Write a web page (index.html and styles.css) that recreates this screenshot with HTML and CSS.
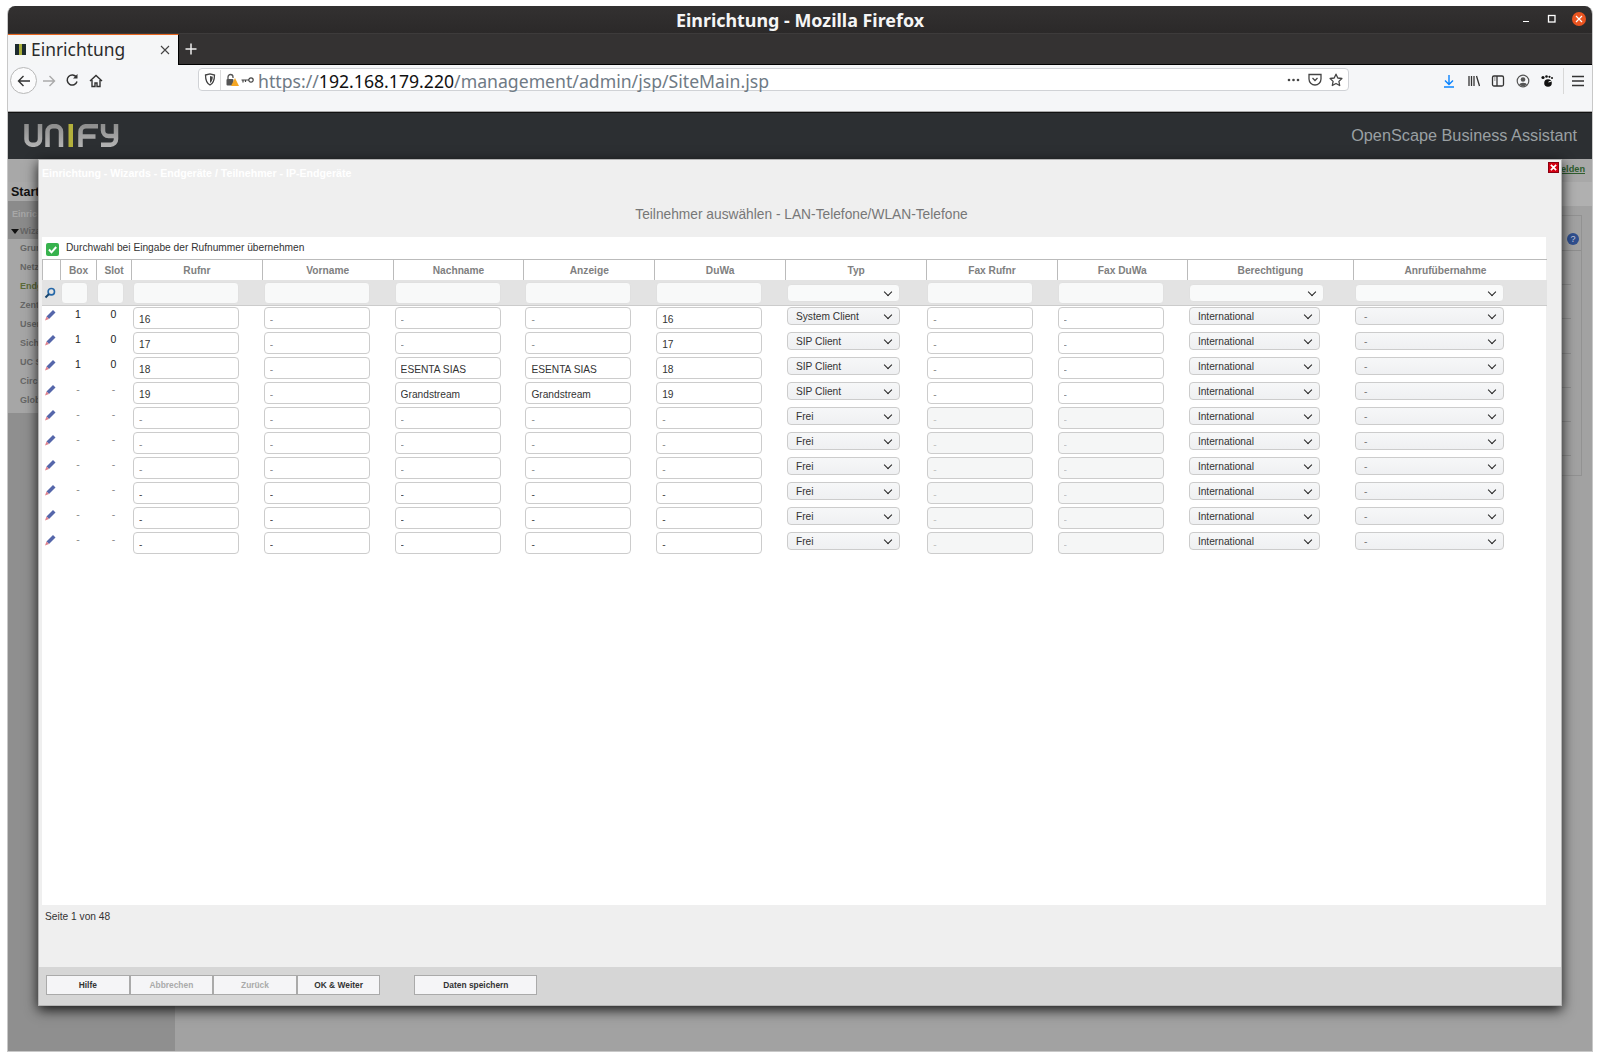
FILE: index.html
```html
<!DOCTYPE html>
<html lang="de">
<head>
<meta charset="utf-8">
<title>Einrichtung - Mozilla Firefox</title>
<link rel="stylesheet" href="styles.css">
</head>
<body>
<div class="window">
  <div class="titlebar">
    <span class="title">Einrichtung - Mozilla Firefox</span>
    <div class="winctl">
      <svg width="12" height="12" viewBox="0 0 12 12"><path d="M3 8.500h6" stroke="#fff" stroke-width="1.200"/></svg>
      <svg width="12" height="12" viewBox="0 0 12 12"><rect x="2.500" y="2.500" width="6.500" height="6.500" fill="none" stroke="#fff" stroke-width="1.300"/></svg>
      <span class="winclose"><svg width="14" height="14" viewBox="0 0 14 14"><path d="M4 4l6 6M10 4l-6 6" stroke="#fff" stroke-width="1.200"/></svg></span>
    </div>
  </div>
  <div class="tabbar">
    <div class="tab">
      <span class="favicon"><i></i></span>
      <span class="tabtext">Einrichtung</span>
      <svg class="tabx" width="10" height="10" viewBox="0 0 10 10"><path d="M1 1l8 8M9 1l-8 8" stroke="#444" stroke-width="1.100"/></svg>
    </div>
    <svg class="newtab" width="12" height="12" viewBox="0 0 12 12"><path d="M6 .5v11M.5 6h11" stroke="#eee" stroke-width="1.500"/></svg>
  </div>
  <div class="toolbar">
    <span class="backbtn"><svg width="16" height="16" viewBox="0 0 16 16"><path d="M14 8H2.500M7.500 3L2.500 8l5 5" fill="none" stroke="#333" stroke-width="1.400"/></svg></span>
    <svg class="tool-fwd" width="16" height="16" viewBox="0 0 16 16"><path d="M2 8h11.500M8.500 3l5 5-5 5" fill="none" stroke="#aaa" stroke-width="1.400"/></svg>
    <svg class="tool-reload" width="14" height="14" viewBox="0 0 14 14"><path d="M11.500 4.500A5 5 0 1 0 12 8.500" fill="none" stroke="#333" stroke-width="1.500"/><path d="M12.500 1v4.500H8z" fill="#333"/></svg>
    <svg class="tool-home" width="14" height="14" viewBox="0 0 14 14"><path d="M1 7l6-5.500L13 7M3 6v6.500h3V9h2v3.500h3V6" fill="none" stroke="#333" stroke-width="1.400"/></svg>
    <div class="urlbar">
      <svg class="u-shield" width="12" height="13" viewBox="0 0 12 13"><path d="M1.500 2L6 .8 10.500 2c0 5-1.500 8.500-4.500 10C3 10.500 1.500 7 1.500 2z" fill="none" stroke="#444" stroke-width="1.300"/><path d="M6 3l2.800.8C8.700 7 7.800 8.800 6 10z" fill="#444"/></svg>
      <span class="u-div"></span>
      <svg class="u-lock" width="14" height="14" viewBox="0 0 14 14"><path d="M3 6V4a2.500 2.500 0 0 1 5 0v1" fill="none" stroke="#555" stroke-width="1.300"/><rect x="1.500" y="6" width="7" height="6.500" rx="1" fill="#555"/><path d="M10 5l4 8H6z" fill="#f5a623"/></svg>
      <svg class="u-key" width="13" height="8" viewBox="0 0 13 8"><circle cx="10" cy="4" r="2.200" fill="none" stroke="#444" stroke-width="1.200"/><path d="M8 4H.5M2 4v2.500M4.500 4v2" stroke="#444" stroke-width="1.200" fill="none"/></svg>
      <span class="url">https://<b>192.168.179.220</b>/management/admin/jsp/SiteMain.jsp</span>
      <svg class="u-dots" width="13" height="4" viewBox="0 0 13 4"><circle cx="2" cy="2" r="1.300" fill="#444"/><circle cx="6.500" cy="2" r="1.300" fill="#444"/><circle cx="11" cy="2" r="1.300" fill="#444"/></svg>
      <svg class="u-pocket" width="14" height="13" viewBox="0 0 14 13"><path d="M1 1.500h12v4.500a6 6 0 0 1-12 0z" fill="none" stroke="#444" stroke-width="1.300"/><path d="M4.500 5L7 7.500 9.500 5" fill="none" stroke="#444" stroke-width="1.300"/></svg>
      <svg class="u-star" width="14" height="14" viewBox="0 0 14 14"><path d="M7 1.200l1.800 3.800 4.100.5-3 2.900.8 4.100L7 10.500l-3.700 2 .8-4.100-3-2.900 4.100-.5z" fill="none" stroke="#444" stroke-width="1.300" stroke-linejoin="round"/></svg>
    </div>
    <div class="tools-right">
      <svg width="14" height="14" viewBox="0 0 14 14"><path d="M7 1v9M3 6.500L7 10.500l4-4" fill="none" stroke="#0a84ff" stroke-width="1.400"/><path d="M2 13h10" stroke="#0a84ff" stroke-width="1.400"/></svg>
      <svg width="14" height="14" viewBox="0 0 14 14"><path d="M2 2v10M4.500 2v10M7 2v10M9.500 2l3 10" fill="none" stroke="#333" stroke-width="1.300"/></svg>
      <svg width="14" height="14" viewBox="0 0 14 14"><rect x="1.500" y="2" width="11" height="10" rx="1.500" fill="none" stroke="#333" stroke-width="1.300"/><path d="M6 2v10" stroke="#333" stroke-width="1.300"/><path d="M3 4h1.500M3 6h1.500" stroke="#777"/></svg>
      <svg width="14" height="14" viewBox="0 0 14 14"><circle cx="7" cy="7" r="5.800" fill="none" stroke="#555" stroke-width="1.200"/><circle cx="7" cy="5.500" r="2.300" fill="#555"/><path d="M3 10.500a4.500 3.200 0 0 1 8 0 5.500 5.500 0 0 1-8 0z" fill="#555"/></svg>
      <svg width="14" height="14" viewBox="0 0 14 14"><ellipse cx="8" cy="9" rx="3.800" ry="3.800" fill="#111"/><circle cx="3" cy="3.500" r="1.600" fill="#111"/><circle cx="6.500" cy="2.500" r="1.300" fill="#111"/><circle cx="9.500" cy="2.800" r="1.100" fill="#111"/><circle cx="12" cy="4" r="1" fill="#111"/><path d="M8.500 8l3-1" stroke="#fff" stroke-width="1"/></svg>
      <span class="t-div"></span>
      <svg width="14" height="14" viewBox="0 0 14 14"><path d="M1 2.500h12M1 7h12M1 11.500h12" stroke="#333" stroke-width="1.400"/></svg>
    </div>
  </div>
  <header class="appheader">
    <svg class="logo" width="95" height="23" viewBox="0 0 95 23" role="img" aria-label="Unify">
      <defs><linearGradient id="lg" gradientUnits="userSpaceOnUse" x1="0" y1="0" x2="0" y2="23"><stop offset="0" stop-color="#8c8c8c"/><stop offset="1" stop-color="#b4b4b4"/></linearGradient></defs>
      <g fill="none" stroke="url(#lg)" stroke-width="4.500">
        <path d="M2.500 0v15a5.500 5.500 0 0 0 5.500 5.700h2.500a5.500 5.500 0 0 0 5.500-5.700V0"/>
        <path d="M23.500 23V7.700a5.500 5.500 0 0 1 5.500-5.500h2.500a5.500 5.500 0 0 1 5.500 5.500V23"/>
        <path d="M56.500 23V7.700a5.500 5.500 0 0 1 5.500-5.500H74M56.500 12.500H71.500"/>
        <path d="M79 0v6.500a5.500 5.500 0 0 0 5.500 5.500H92M92 0V15a5.500 5.500 0 0 1-5.500 5.700H77"/>
      </g>
      <rect class="logo-i" x="44.500" y="0" width="4.500" height="23"/>
    </svg>
    <span class="appname">OpenScape Business Assistant</span>
  </header>
  <div class="appbody">
    <aside class="sidebar">
      <div class="side-top"></div>
      <div class="side-start">Start</div>
      <div class="side-dark">
        <div class="side-head">Einric</div>
        <div class="side-wiz"><i></i>Wiza</div>
      </div>
      <ul class="side-list">
        <li>Grun</li>
        <li>Netz</li>
        <li class="current">Endg</li>
        <li>Zent</li>
        <li>User</li>
        <li>Sich</li>
        <li>UC S</li>
        <li>Circ</li>
        <li>Glob</li>
      </ul>
    </aside>
    <main class="bg-main">
      <div class="bg-top"><a class="bg-link">Abmelden</a></div>
      <div class="bg-bar"></div>
      <div class="bg-panel">
        <div class="bg-panel-head"><span class="bg-help">?</span></div>
        <div class="bg-line"></div><div class="bg-line"></div><div class="bg-line"></div>
        <div class="bg-line"></div><div class="bg-line"></div><div class="bg-line"></div>
      </div>
    </main>

    <section class="modal">
      <span class="close"><svg width="8" height="8" viewBox="0 0 8 8"><path d="M1 1l6 6M7 1L1 7" stroke="#fff" stroke-width="2"/></svg></span>
      <div class="modal-head">
        <div class="crumb">Einrichtung - Wizards - Endgeräte / Teilnehmer - IP-Endgeräte</div>
        <h1 class="heading">Teilnehmer auswählen - LAN-Telefone/WLAN-Telefone</h1>
      </div>
      <div class="panel">
        <label class="checkrow">
          <span class="check"><svg width="13" height="13" viewBox="0 0 13 13"><path d="M3 6.500l2.500 2.800L10.200 4" fill="none" stroke="#fff" stroke-width="2"/></svg></span>
          Durchwahl bei Eingabe der Rufnummer übernehmen
        </label>
        <table class="grid">
          <colgroup>
            <col class="c-icon"><col class="c-box"><col class="c-slot"><col class="c-w"><col class="c-w"><col class="c-w"><col class="c-w"><col class="c-w"><col class="c-typ"><col class="c-fax"><col class="c-fax"><col class="c-ber"><col class="c-anr">
          </colgroup>
          <thead>
            <tr class="hdr"><th></th><th>Box</th><th>Slot</th><th>Rufnr</th><th>Vorname</th><th>Nachname</th><th>Anzeige</th><th>DuWa</th><th>Typ</th><th>Fax Rufnr</th><th>Fax DuWa</th><th>Berechtigung</th><th class="th-last">Anrufübernahme</th></tr>
            <tr class="flt">
              <td><svg class="mag" width="12" height="12" viewBox="0 0 12 12"><circle cx="7.300" cy="4.700" r="3.200" fill="none" stroke="#2467a8" stroke-width="1.600"/><path d="M5 7L1.500 10.500" stroke="#17456f" stroke-width="2"/></svg></td>
              <td class="p1"><input class="in in-s"></td><td class="p1"><input class="in in-s"></td>
              <td><input class="in"></td><td><input class="in"></td><td><input class="in"></td><td><input class="in"></td><td><input class="in"></td>
              <td><span class="sel s-typ"><select><option></option></select></span></td>
              <td class="p1"><input class="in"></td><td class="p1"><input class="in"></td>
              <td><span class="sel s-ber-f"><select><option></option></select></span></td>
              <td><span class="sel s-anr"><select><option></option></select></span></td>
            </tr>
          </thead>
          <tbody>
            <tr>
              <td><svg class="pen" width="12" height="12" viewBox="0 0 12 12"><path d="M2.500 7.500L9 1l2.500 2.500L5 10z" fill="#5566aa"/><path d="M2.500 7.500L5 10 1 11.500z" fill="#e0808a"/></svg></td>
              <td class="num">1</td><td class="num">0</td>
              <td><input class="in" value="16"></td><td><input class="in dim" value="-"></td><td><input class="in dim" value="-"></td><td><input class="in dim" value="-"></td><td><input class="in" value="16"></td>
              <td><span class="sel s-typ"><select><option>System Client</option></select></span></td>
              <td class="p1"><input class="in dim" value="-"></td><td class="p1"><input class="in dim" value="-"></td>
              <td><span class="sel s-ber"><select><option>International</option></select></span></td>
              <td><span class="sel s-anr"><select><option>-</option></select></span></td>
            </tr>
            <tr>
              <td><svg class="pen" width="12" height="12" viewBox="0 0 12 12"><path d="M2.500 7.500L9 1l2.500 2.500L5 10z" fill="#5566aa"/><path d="M2.500 7.500L5 10 1 11.500z" fill="#e0808a"/></svg></td>
              <td class="num">1</td><td class="num">0</td>
              <td><input class="in" value="17"></td><td><input class="in dim" value="-"></td><td><input class="in dim" value="-"></td><td><input class="in dim" value="-"></td><td><input class="in" value="17"></td>
              <td><span class="sel s-typ"><select><option>SIP Client</option></select></span></td>
              <td class="p1"><input class="in dim" value="-"></td><td class="p1"><input class="in dim" value="-"></td>
              <td><span class="sel s-ber"><select><option>International</option></select></span></td>
              <td><span class="sel s-anr"><select><option>-</option></select></span></td>
            </tr>
            <tr>
              <td><svg class="pen" width="12" height="12" viewBox="0 0 12 12"><path d="M2.500 7.500L9 1l2.500 2.500L5 10z" fill="#5566aa"/><path d="M2.500 7.500L5 10 1 11.500z" fill="#e0808a"/></svg></td>
              <td class="num">1</td><td class="num">0</td>
              <td><input class="in" value="18"></td><td><input class="in dim" value="-"></td><td><input class="in" value="ESENTA SIAS"></td><td><input class="in" value="ESENTA SIAS"></td><td><input class="in" value="18"></td>
              <td><span class="sel s-typ"><select><option>SIP Client</option></select></span></td>
              <td class="p1"><input class="in dim" value="-"></td><td class="p1"><input class="in dim" value="-"></td>
              <td><span class="sel s-ber"><select><option>International</option></select></span></td>
              <td><span class="sel s-anr"><select><option>-</option></select></span></td>
            </tr>
            <tr>
              <td><svg class="pen" width="12" height="12" viewBox="0 0 12 12"><path d="M2.500 7.500L9 1l2.500 2.500L5 10z" fill="#5566aa"/><path d="M2.500 7.500L5 10 1 11.500z" fill="#e0808a"/></svg></td>
              <td class="num mut">-</td><td class="num mut">-</td>
              <td><input class="in" value="19"></td><td><input class="in dim" value="-"></td><td><input class="in" value="Grandstream"></td><td><input class="in" value="Grandstream"></td><td><input class="in" value="19"></td>
              <td><span class="sel s-typ"><select><option>SIP Client</option></select></span></td>
              <td class="p1"><input class="in dim" value="-"></td><td class="p1"><input class="in dim" value="-"></td>
              <td><span class="sel s-ber"><select><option>International</option></select></span></td>
              <td><span class="sel s-anr"><select><option>-</option></select></span></td>
            </tr>
            <tr>
              <td><svg class="pen" width="12" height="12" viewBox="0 0 12 12"><path d="M2.500 7.500L9 1l2.500 2.500L5 10z" fill="#5566aa"/><path d="M2.500 7.500L5 10 1 11.500z" fill="#e0808a"/></svg></td>
              <td class="num mut">-</td><td class="num mut">-</td>
              <td><input class="in dim" value="-"></td><td><input class="in dim" value="-"></td><td><input class="in dim" value="-"></td><td><input class="in dim" value="-"></td><td><input class="in dim" value="-"></td>
              <td><span class="sel s-typ"><select><option>Frei</option></select></span></td>
              <td class="p1"><input class="in off" value="-"></td><td class="p1"><input class="in off" value="-"></td>
              <td><span class="sel s-ber"><select><option>International</option></select></span></td>
              <td><span class="sel s-anr"><select><option>-</option></select></span></td>
            </tr>
            <tr>
              <td><svg class="pen" width="12" height="12" viewBox="0 0 12 12"><path d="M2.500 7.500L9 1l2.500 2.500L5 10z" fill="#5566aa"/><path d="M2.500 7.500L5 10 1 11.500z" fill="#e0808a"/></svg></td>
              <td class="num mut">-</td><td class="num mut">-</td>
              <td><input class="in dim" value="-"></td><td><input class="in dim" value="-"></td><td><input class="in dim" value="-"></td><td><input class="in dim" value="-"></td><td><input class="in dim" value="-"></td>
              <td><span class="sel s-typ"><select><option>Frei</option></select></span></td>
              <td class="p1"><input class="in off" value="-"></td><td class="p1"><input class="in off" value="-"></td>
              <td><span class="sel s-ber"><select><option>International</option></select></span></td>
              <td><span class="sel s-anr"><select><option>-</option></select></span></td>
            </tr>
            <tr>
              <td><svg class="pen" width="12" height="12" viewBox="0 0 12 12"><path d="M2.500 7.500L9 1l2.500 2.500L5 10z" fill="#5566aa"/><path d="M2.500 7.500L5 10 1 11.500z" fill="#e0808a"/></svg></td>
              <td class="num mut">-</td><td class="num mut">-</td>
              <td><input class="in dim" value="-"></td><td><input class="in dim" value="-"></td><td><input class="in dim" value="-"></td><td><input class="in dim" value="-"></td><td><input class="in dim" value="-"></td>
              <td><span class="sel s-typ"><select><option>Frei</option></select></span></td>
              <td class="p1"><input class="in off" value="-"></td><td class="p1"><input class="in off" value="-"></td>
              <td><span class="sel s-ber"><select><option>International</option></select></span></td>
              <td><span class="sel s-anr"><select><option>-</option></select></span></td>
            </tr>
            <tr>
              <td><svg class="pen" width="12" height="12" viewBox="0 0 12 12"><path d="M2.500 7.500L9 1l2.500 2.500L5 10z" fill="#5566aa"/><path d="M2.500 7.500L5 10 1 11.500z" fill="#e0808a"/></svg></td>
              <td class="num mut">-</td><td class="num mut">-</td>
              <td><input class="in dim" value="-"></td><td><input class="in dim" value="-"></td><td><input class="in dim" value="-"></td><td><input class="in dim" value="-"></td><td><input class="in dim" value="-"></td>
              <td><span class="sel s-typ"><select><option>Frei</option></select></span></td>
              <td class="p1"><input class="in off" value="-"></td><td class="p1"><input class="in off" value="-"></td>
              <td><span class="sel s-ber"><select><option>International</option></select></span></td>
              <td><span class="sel s-anr"><select><option>-</option></select></span></td>
            </tr>
            <tr>
              <td><svg class="pen" width="12" height="12" viewBox="0 0 12 12"><path d="M2.500 7.500L9 1l2.500 2.500L5 10z" fill="#5566aa"/><path d="M2.500 7.500L5 10 1 11.500z" fill="#e0808a"/></svg></td>
              <td class="num mut">-</td><td class="num mut">-</td>
              <td><input class="in dim" value="-"></td><td><input class="in dim" value="-"></td><td><input class="in dim" value="-"></td><td><input class="in dim" value="-"></td><td><input class="in dim" value="-"></td>
              <td><span class="sel s-typ"><select><option>Frei</option></select></span></td>
              <td class="p1"><input class="in off" value="-"></td><td class="p1"><input class="in off" value="-"></td>
              <td><span class="sel s-ber"><select><option>International</option></select></span></td>
              <td><span class="sel s-anr"><select><option>-</option></select></span></td>
            </tr>
            <tr>
              <td><svg class="pen" width="12" height="12" viewBox="0 0 12 12"><path d="M2.500 7.500L9 1l2.500 2.500L5 10z" fill="#5566aa"/><path d="M2.500 7.500L5 10 1 11.500z" fill="#e0808a"/></svg></td>
              <td class="num mut">-</td><td class="num mut">-</td>
              <td><input class="in dim" value="-"></td><td><input class="in dim" value="-"></td><td><input class="in dim" value="-"></td><td><input class="in dim" value="-"></td><td><input class="in dim" value="-"></td>
              <td><span class="sel s-typ"><select><option>Frei</option></select></span></td>
              <td class="p1"><input class="in off" value="-"></td><td class="p1"><input class="in off" value="-"></td>
              <td><span class="sel s-ber"><select><option>International</option></select></span></td>
              <td><span class="sel s-anr"><select><option>-</option></select></span></td>
            </tr>
          </tbody>
        </table>
      </div>
      <div class="pager">Seite 1 von 48</div>
      <footer class="modal-foot">
        <button class="btn">Hilfe</button>
        <button class="btn off-btn">Abbrechen</button>
        <button class="btn off-btn">Zurück</button>
        <button class="btn">OK &amp; Weiter</button>
        <button class="btn save">Daten speichern</button>
      </footer>
    </section>
  </div>
</div>
</body>
</html>
```

FILE: styles.css
```css
* { box-sizing: border-box; }
html, body { margin: 0; height: 100%; background: #fff; }
body { padding: 6px 7px 7px; font-family: "Liberation Sans", Arial, sans-serif; overflow: hidden; }

.window { height: 1046px; display: flex; flex-direction: column; border-radius: 8px 8px 0 0; overflow: hidden; border-left: 1px solid #c8c8c8; border-right: 1px solid #c8c8c8; border-bottom: 1px solid #c8c8c8; }

/* Title bar */
.titlebar { height: 27px; flex: none; background: linear-gradient(#333131, #2b2929); display: flex; align-items: center; justify-content: center; position: relative; }
.title { color: #f5f5f5; font: bold 17.9px "Noto Sans", sans-serif; }
.winctl { position: absolute; right: 6px; top: 6px; display: flex; align-items: center; gap: 14px; }
.winclose { width: 14px; height: 14px; border-radius: 50%; background: #e95420; display: block; }
.winclose svg { display: block; }

/* Tabs */
.tabbar { height: 32px; flex: none; background: #343232; border-top: 1px solid #3d3b3b; border-bottom: 1px solid #000; display: flex; align-items: center; }
.tab { width: 171px; height: 31px; background: #f5f6f7; border-top: 1px solid #e8661f; display: flex; align-items: center; padding-left: 7px; border-right: 1px solid #000; }
.favicon { width: 11px; height: 11px; background: #1c2a2e; display: flex; justify-content: center; }
.favicon i { width: 3px; background: #a8ad3a; }
.tabtext { margin: -2px 0 0 5px; font: 17.400px "Noto Sans", sans-serif; color: #2b2b2b; }
.tabx { margin-left: auto; margin-right: 8px; }
.newtab { margin-left: 6px; }

/* Toolbar */
.toolbar { height: 47px; flex: none; background: #f5f6f8; border-bottom: 1px solid #a8a8a8; display: flex; align-items: flex-start; padding: 2px 0 0 2px; }
.backbtn { width: 27px; height: 27px; border-radius: 50%; border: 1px solid #b8b8b8; background: #fbfbfc; display: flex; align-items: center; justify-content: center; flex: none; }
.tool-fwd { margin: 6px 0 0 4px; flex: none; }
.tool-reload { margin: 6px 0 0 8px; flex: none; }
.tool-home { margin: 7px 0 0 10px; flex: none; }
.urlbar { margin: 1px 0 0 95px; width: 1151px; height: 23px; background: #fff; border: 1px solid #d0d2d6; border-radius: 4px; display: flex; align-items: center; padding: 0 5px; flex: none; }
.u-shield { flex: none; }
.u-div { width: 1px; height: 20px; background: #dcdcdc; margin: 0 4px; flex: none; }
.u-lock { flex: none; }
.u-key { margin-left: 2px; flex: none; }
.url { margin: 2px 0 0 4px; font: 17.650px "Noto Sans", sans-serif; color: #6f7a85; white-space: nowrap; flex: 1; }
.url b { font-weight: 400; color: #111; }
.u-dots { margin-right: 8px; flex: none; }
.u-pocket { margin-right: 7px; flex: none; }
.u-star { flex: none; }
.tools-right { margin-left: 93px; display: flex; align-items: center; gap: 10.500px; height: 27px; }
.t-div { width: 1px; height: 26px; background: #d8d8d8; margin: 0 -3px 0 -2px; }

/* App header */
.appheader { height: 47px; flex: none; background: #2c2f32; border-top: 1px solid #111; display: flex; align-items: center; justify-content: space-between; padding: 0 15px 1px 16px; }
.logo { display: block; }
.logo-i { fill: #b3b03c; }
.appname { color: #9aa0a3; font-size: 16.250px; }

/* Page behind the dialog */
.appbody { flex: 1; min-height: 0; position: relative; display: flex; background: #a2a2a2; }
.sidebar { width: 167px; flex: none; background: #8f8f8f; font-size: 9px; font-weight: bold; color: #666; }
.side-top { height: 23px; background: #a8a8a8; }
.side-start { height: 19px; background: #aaa; color: #111; font-size: 12.500px; padding: 2px 0 0 3px; line-height: 17px; }
.side-dark { background: #8b8b8b; height: 38px; padding-top: 6px; }
.side-head { color: #a8a8a8; padding-left: 4px; line-height: 14px; height: 17px; }
.side-wiz { padding-left: 3px; display: flex; align-items: center; gap: 0; line-height: 14px; }
.side-wiz i { width: 0; height: 0; border: 4px solid transparent; border-top: 5px solid #111; border-bottom: 0; margin-right: 1px; }
.side-list { margin: 0; padding: 0; list-style: none; background: #a6a6a6; height: 174px; }
.side-list li { height: 19px; padding-left: 12px; line-height: 19px; white-space: nowrap; }
.side-list .current { color: #5c6b3a; }
.bg-main { flex: 1; min-width: 0; display: flex; flex-direction: column; align-items: stretch; }
.bg-top { height: 23px; background: #a8a8a8; text-align: right; padding: 2px 7px 0 0; font-size: 9.200px; font-weight: bold; line-height: 16px; }
.bg-link { color: #2f5e2f; text-decoration: underline; }
.bg-bar { height: 24px; background: #b0b0b0; }
.bg-panel { margin: 9px 10px 0 20px; height: 261px; border: 1px solid #929292; }
.bg-panel-head { height: 35px; border-bottom: 1px solid #8e8e8e; display: flex; justify-content: flex-end; align-items: flex-end; padding: 0 2px 5px 0; }
.bg-help { width: 12px; height: 12px; border-radius: 50%; background: #2f4f8f; color: #ccd; font-size: 9px; text-align: center; line-height: 12px; }
.bg-line { height: 34.200px; margin-right: 10px; border-bottom: 1px solid #8e8e8e; }
.bg-line:first-of-type { height: 43px; }

/* Dialog */
.modal { position: absolute; left: 30px; top: 0; width: 1524px; height: 847px; background: #efefef; border: 1px solid #b5b5b5; box-shadow: 0 4px 12px rgba(0,0,0,.85); display: flex; flex-direction: column; }
.close { position: absolute; right: 2px; top: 2px; width: 11px; height: 11px; background: #d40012; border: 1px solid #8a0010; display: flex; align-items: center; justify-content: center; }
.close svg { display: block; width: 7px; height: 7px; }
.modal-head { height: 77px; flex: none; padding: 6px 0 0 3px; }
.crumb { color: #fff; font-size: 10.600px; font-weight: bold; line-height: 14px; }
.heading { margin: 26px 0 0; font-size: 13.750px; font-weight: 400; color: #777; text-align: center; line-height: 18px; }
.panel { flex: 1; min-height: 0; margin: 0 15px 0 3px; background: #fff; }
.checkrow { display: flex; height: 22px; padding: 5px 0 0 4px; font-size: 10.200px; color: #333; gap: 7px; line-height: 11px; }
.check { width: 13px; height: 13px; background: #37b24d; border-radius: 2px; margin-top: 1px; display: block; flex: none; }
.check svg { display: block; }
.pager { height: 62px; flex: none; padding: 5px 0 0 6px; font-size: 10.200px; line-height: 14px; color: #333; }
.modal-foot { height: 38px; flex: none; background: #d6d6d6; padding: 8px 0 0 7px; display: flex; align-items: flex-start; }
.btn { width: 83.600px; height: 20px; background: #f5f5f7; border: 1px solid #aaa; padding: 0; font: bold 8.400px "Liberation Sans", sans-serif; color: #333; }
.off-btn { color: #aaa; }
.save { width: 123px; margin-left: 34px; }

/* Table */
.grid { width: 1504px; table-layout: fixed; border-collapse: separate; border-spacing: 0; }
.c-icon { width: 18px; } .c-box { width: 36px; } .c-slot { width: 35px; }
.c-w { width: 130.800px; } .c-typ { width: 141.300px; } .c-fax { width: 130.300px; }
.c-ber { width: 166px; } .c-anr { width: 194.100px; }
.grid th, .grid td { padding: 0; }
.hdr th { height: 21px; border-top: 1px solid #bbb; border-left: 1px solid #bbb; font-size: 10.200px; color: #808080; text-align: center; font-weight: bold; }
.hdr .th-last { padding-right: 10px; }
.flt td { height: 26px; background: #e3e3e3; border-bottom: 1px solid #ccc; vertical-align: top; padding: 2px 0 0 2px; }
.grid tbody td { height: 25px; vertical-align: top; padding: 1px 0 0 2px; }
.grid .p1 { padding-left: 1px; }
.grid .num { padding: 1px 0 0; font-size: 10.500px; line-height: 14px; color: #222; text-align: center; }
.grid .mut { color: #888; }
.in { display: block; width: 106px; height: 22px; background: #fff; border: 1px solid #ccc; border-radius: 4px; padding: 2px 0 0 5px; font: 10.200px "Liberation Sans", sans-serif; color: #333; outline: 0; }
.flt .in { background: #f8f9f9; border-color: #e0e0e0; }
.in-s { width: 27px; }
.dim { color: #888; }
.grid tbody tr:nth-child(n+8) .dim { color: #444; }
.off { background: #f5f6f6; color: #c0c0c0; }
.sel { display: block; position: relative; height: 18px; }
.flt .sel { margin-top: 2px; }
.sel select { appearance: none; display: block; width: 100%; height: 18px; padding: 0 0 0 8px; background: linear-gradient(#f6f7f8, #eff0f2); border: 1px solid #ccc; border-radius: 4px; font: 10.200px "Liberation Sans", sans-serif; color: #333; outline: 0; }
.flt .sel select { background: #f9fafa; border-color: #e0e0e0; }
.sel::after { content: ""; position: absolute; right: 9px; top: 5px; width: 5px; height: 5px; border-right: 1.500px solid #222; border-bottom: 1.500px solid #222; transform: rotate(45deg); pointer-events: none; }
.s-typ { width: 113px; }
.s-ber { width: 131px; }
.s-ber-f { width: 135px; }
.s-anr { width: 149px; }
.s-anr select { color: #777; }
.mag { display: block; margin: 5px 0 0 0; }
.pen { display: block; margin: 2px 0 0 0; }
```
